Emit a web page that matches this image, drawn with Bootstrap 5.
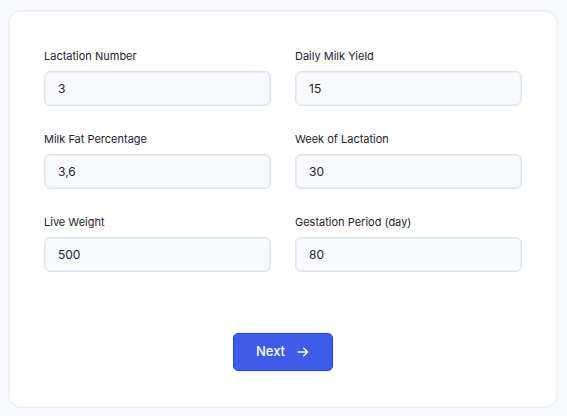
<!DOCTYPE html>
<html lang="en">
<head>
<meta charset="utf-8">
<meta name="viewport" content="width=device-width, initial-scale=1">
<title>Herd details</title>
<link href="https://cdn.jsdelivr.net/npm/bootstrap@5.3.0/dist/css/bootstrap.min.css" rel="stylesheet">
<style>
body { background: #f8f9fd; color: #1e2233; font-family: Inter, "Open Sans", sans-serif; }
.page { padding: 10px 9px 8px 8px; }
.form-panel { border: 1px solid #e8ebf4; border-radius: 13px; padding: 37px 35px 36px; box-shadow: inset 0 0 0 1px #f4f5fa; }
.fields { --bs-gutter-x: 24px; --bs-gutter-y: 25px; }
.field-label { display: block; font-size: 11px; line-height: 16px; margin-bottom: 7px; }
.field-input { height: 35px; padding: 0 13px; border: 1px solid #dce2ef; border-radius: 6px; background: #f8f9fd; color: #1e2233; font-size: 12px; line-height: 20px; box-shadow: inset 0 0 0 1px #e9edf6; }
.field-input:focus { background: #f8f9fd; border-color: #3b5be8; box-shadow: none; }
.actions { margin-top: 61px; }
.btn-next { --bs-btn-color: #fff; --bs-btn-bg: #3d5ce8; --bs-btn-border-color: #1f48e2; --bs-btn-hover-color: #fff; --bs-btn-hover-bg: #2f4fdb; --bs-btn-border-radius: 5px; height: 38px; padding: 0 22px; font-size: 13px; font-weight: 500; gap: 11px; }
</style>
</head>
<body>
<main class="page">
  <form class="form-panel bg-white">
    <div class="row fields">
      <div class="col-6"><label class="field-label" for="lactation">Lactation Number</label><input class="form-control field-input" id="lactation" type="text" value="3"></div>
      <div class="col-6"><label class="field-label" for="yield">Daily Milk Yield</label><input class="form-control field-input" id="yield" type="text" value="15"></div>
      <div class="col-6"><label class="field-label" for="fat">Milk Fat Percentage</label><input class="form-control field-input" id="fat" type="text" value="3,6"></div>
      <div class="col-6"><label class="field-label" for="week">Week of Lactation</label><input class="form-control field-input" id="week" type="text" value="30"></div>
      <div class="col-6"><label class="field-label" for="weight">Live Weight</label><input class="form-control field-input" id="weight" type="text" value="500"></div>
      <div class="col-6"><label class="field-label" for="gestation">Gestation Period (day)</label><input class="form-control field-input" id="gestation" type="text" value="80"></div>
    </div>
    <div class="actions d-flex justify-content-center">
      <button class="btn btn-next d-inline-flex align-items-center" type="button">Next
        <svg width="14" height="14" viewBox="0 0 14 14" fill="none" stroke="currentColor" stroke-width="1.4" stroke-linecap="round" stroke-linejoin="round" aria-hidden="true"><path d="M2.2 7h9.2M7.8 3.3 11.6 7 7.8 10.7"/></svg>
      </button>
    </div>
  </form>
</main>
<script src="https://cdn.jsdelivr.net/npm/bootstrap@5.3.0/dist/js/bootstrap.bundle.min.js"></script>
</body>
</html>
